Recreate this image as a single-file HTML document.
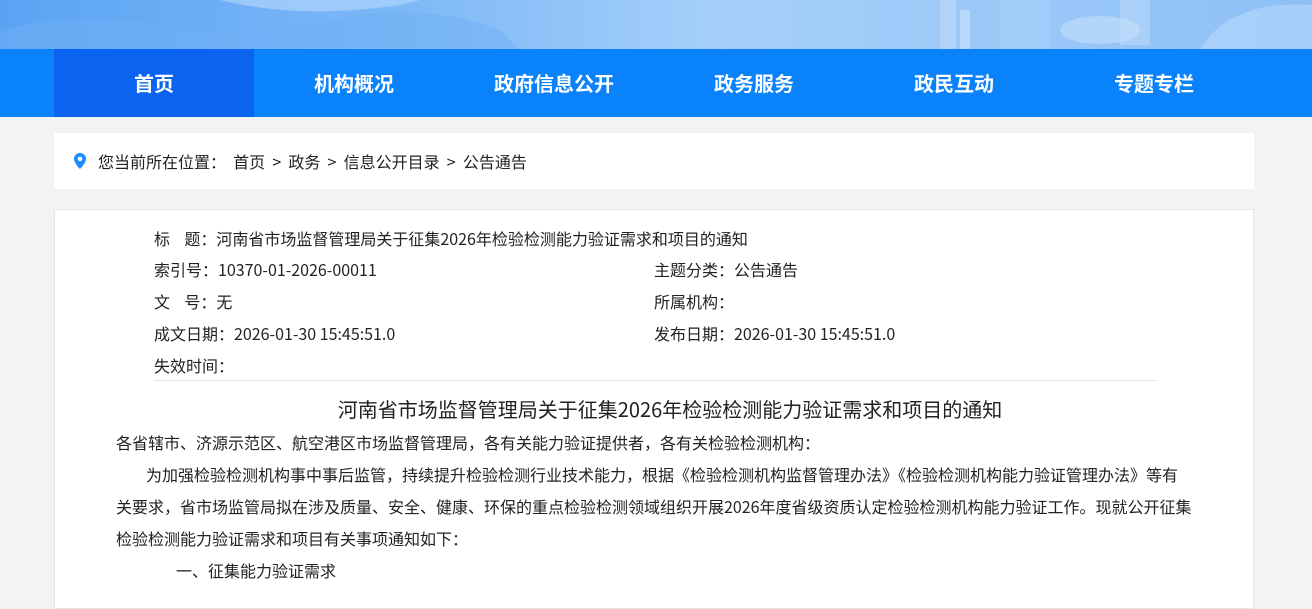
<!DOCTYPE html>
<html><head><meta charset="utf-8"><style>
*{margin:0;padding:0;box-sizing:border-box}
body{width:1312px;height:564px;overflow:hidden;background:#f2f3f5;font-family:"Noto Sans CJK SC","Liberation Sans",sans-serif;color:#222}
.banner{position:absolute;left:0;top:0;width:1312px;height:49px;background:linear-gradient(90deg,#5aa3f3 0%,#7cb8f7 30%,#a6cffa 55%,#9cc8f8 75%,#8ec0f7 100%);overflow:hidden}
.nav{position:absolute;left:0;top:49px;width:1312px;height:68px;background:#0a82fb}
.nav a{position:absolute;top:0;height:68px;width:200px;line-height:68px;text-align:center;color:#fff;font-size:20px;font-weight:bold;text-decoration:none}
.nav a.on{background:#0a64f0}
.crumb{position:absolute;left:54px;top:133px;width:1200px;height:56px;background:#fff;font-size:16px;line-height:56px;padding-left:44px;color:#222;white-space:pre}
.crumb svg{position:absolute;left:20px;top:20px}
.box{position:absolute;left:54px;top:209px;width:1200px;height:400px;background:#fff;border:1px solid #e6e6e6}
.m{position:absolute;font-size:16px;line-height:20px;white-space:nowrap;color:#222}
.sep{position:absolute;left:99px;top:170px;width:1002px;height:1px;background:#e5e5e5}
.t{position:absolute;left:0;width:1230px;top:186px;text-align:center;font-size:20px;line-height:26px;color:#222}
.p{position:absolute;left:61px;font-size:16px;line-height:20px;white-space:nowrap;color:#222}
</style></head><body>
<div class="banner">
<svg width="1312" height="49" style="position:absolute;left:0;top:0">
<path d="M0 30 Q80 10 160 25 T330 20 T500 30 L520 49 L0 49Z" fill="#6fb0f5" opacity=".5"/>
<path d="M220 0 Q300 20 400 5 L420 0Z" fill="#b7d9fc" opacity=".6"/>
<rect x="940" y="0" width="16" height="49" fill="#b8d8fb" opacity=".7"/>
<rect x="960" y="10" width="10" height="39" fill="#c2defc" opacity=".7"/>
<rect x="1000" y="0" width="50" height="49" fill="#a9d0fa" opacity=".6"/>
<rect x="1120" y="0" width="30" height="45" fill="#b9d9fc" opacity=".6"/>
<ellipse cx="1100" cy="30" rx="40" ry="14" fill="#c4dffc" opacity=".6"/>
<path d="M1200 49 Q1230 0 1312 5 L1312 49Z" fill="#b7d8fb" opacity=".6"/>
</svg>
</div>
<div class="nav">
<a class="on" style="left:54px">首页</a>
<a style="left:254px">机构概况</a>
<a style="left:454px">政府信息公开</a>
<a style="left:654px">政务服务</a>
<a style="left:854px">政民互动</a>
<a style="left:1054px">专题专栏</a>
</div>
<div class="crumb"><svg width="12" height="16" viewBox="0 0 12 16"><path d="M6 0C2.7 0 0 2.6 0 5.9 0 10 6 16 6 16s6-6 6-10.1C12 2.6 9.3 0 6 0zm0 8.2A2.3 2.3 0 1 1 6 3.6a2.3 2.3 0 0 1 0 4.6z" fill="#1a8cff"/></svg>您当前所在位置：  首页  &gt;  政务  &gt;  信息公开目录  &gt;  公告通告</div>
<div class="box">
<div class="m" style="left:99px;top:18px">标&nbsp;&nbsp;&nbsp;&nbsp;题：河南省市场监督管理局关于征集2026年检验检测能力验证需求和项目的通知</div>
<div class="m" style="left:99px;top:49px">索引号：10370-01-2026-00011</div>
<div class="m" style="left:599px;top:49px">主题分类：公告通告</div>
<div class="m" style="left:99px;top:81px">文&nbsp;&nbsp;&nbsp;&nbsp;号：无</div>
<div class="m" style="left:599px;top:81px">所属机构：</div>
<div class="m" style="left:99px;top:113px">成文日期：2026-01-30 15:45:51.0</div>
<div class="m" style="left:599px;top:113px">发布日期：2026-01-30 15:45:51.0</div>
<div class="m" style="left:99px;top:145px">失效时间：</div>
<div class="sep"></div>
<div class="t">河南省市场监督管理局关于征集2026年检验检测能力验证需求和项目的通知</div>
<div class="p" style="top:222px">各省辖市、济源示范区、航空港区市场监督管理局，各有关能力验证提供者，各有关检验检测机构：</div>
<div class="p" style="top:254px;left:91px">为加强检验检测机构事中事后监管，持续提升检验检测行业技术能力，根据《检验检测机构监督管理办法》《检验检测机构能力验证管理办法》等有</div>
<div class="p" style="top:286px">关要求，省市场监管局拟在涉及质量、安全、健康、环保的重点检验检测领域组织开展2026年度省级资质认定检验检测机构能力验证工作。现就公开征集</div>
<div class="p" style="top:318px">检验检测能力验证需求和项目有关事项通知如下：</div>
<div class="p" style="top:350px;left:121px">一、征集能力验证需求</div>
</div>
</body></html>
